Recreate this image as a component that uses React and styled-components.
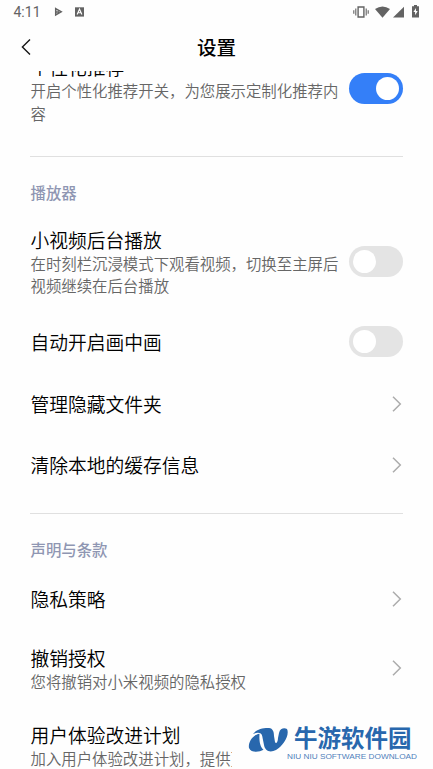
import React from 'react';
import styled, { createGlobalStyle } from 'styled-components';

const GlobalStyle = createGlobalStyle`
  * { box-sizing: border-box; }
  body { margin: 0; background: #fefefe; }
`;

const Screen = styled.div`
  position: relative;
  display: flex;
  flex-direction: column;
  width: 433px;
  height: 769px;
  overflow: hidden;
  background: #fefefe;
  color: #0b0b0b;
  font-family: "Noto Sans CJK SC", sans-serif;
`;

const StatusBar = styled.div`
  display: flex;
  align-items: center;
  flex: none;
  height: 23px;
  padding: 0 14px 0 13.5px;
  color: #636363;
`;

const Clock = styled.span`
  width: 40px;
  font: 14px/24px Roboto, sans-serif;
`;

const StatusIcon = styled.svg`
  flex: none;
  display: block;
  margin-left: ${(p) => p.$gap || 0}px;
`;

const Spacer = styled.div`
  flex: 1;
`;

const Header = styled.header`
  display: grid;
  grid-template-columns: 53px 1fr 53px;
  align-items: center;
  flex: none;
  height: 48px;
`;

const BackIcon = styled.svg`
  display: block;
  margin-left: 20px;
`;

const PageTitle = styled.h1`
  margin: 0;
  font-size: 19.5px;
  line-height: 28px;
  font-weight: 500;
  text-align: center;
  color: #000;
`;

const Content = styled.main`
  flex: 1;
  min-height: 0;
  overflow: hidden;
  padding: 0 30px;
`;

const ScrolledList = styled.div`
  display: flex;
  flex-direction: column;
  margin-top: -16px;
`;

const Row = styled.div`
  display: flex;
  align-items: center;
  justify-content: space-between;
  flex: none;
  height: ${(p) => p.$height}px;
  margin-bottom: ${(p) => p.$after}px;
`;

const RowText = styled.div`
  width: 310px;
  flex: none;
  padding: ${(p) => p.$inset || 0}px 0 0 0.5px;
`;

const RowTitle = styled.div`
  font-size: 18.75px;
  line-height: 24px;
  font-weight: 350;
  white-space: nowrap;
  color: #000;
`;

const RowNote = styled.div`
  font-size: 15.4px;
  line-height: 22.4px;
  font-weight: 350;
  color: #666;
`;

const Divider = styled.div`
  flex: none;
  height: 1px;
  background: #e0e0e0;
`;

const SectionLabel = styled.h2`
  flex: none;
  margin: 23px 0 24px;
  padding-left: 0.5px;
  font-size: 15.4px;
  line-height: 24px;
  font-weight: 500;
  color: #8f96b2;
`;

const Track = styled.div`
  display: flex;
  flex: none;
  justify-content: ${(p) => (p.$on ? 'flex-end' : 'flex-start')};
  width: 54px;
  height: 31px;
  padding: 4px;
  border-radius: 16px;
  background: ${(p) => (p.$on ? '#347ff8' : '#e4e4e4')};
`;

const Knob = styled.div`
  width: 23px;
  height: 23px;
  border-radius: 50%;
  background: #fff;
`;

const ArrowIcon = styled.svg`
  flex: none;
  display: block;
  margin-right: 1px;
`;

const Watermark = styled.div`
  position: absolute;
  left: 232px;
  top: 720px;
  display: flex;
  align-items: flex-start;
  width: 201px;
  height: 49px;
  padding: 7px 0 0 16px;
  background: #fefefe;
  color: #2867ad;
`;

const Brand = styled.div`
  display: flex;
  flex-direction: column;
  margin-left: -2px;
`;

const BrandName = styled.div`
  margin: -2px 0 0 7px;
  font-size: 23.5px;
  line-height: 24px;
  font-weight: 700;
  white-space: nowrap;
`;

const BrandTagline = styled.svg`
  display: block;
`;

const Toggle = ({ on }) => (
  <Track $on={on}>
    <Knob />
  </Track>
);

const Arrow = () => (
  <ArrowIcon width="10" height="18" viewBox="0 0 10 18" fill="none" stroke="#acacac" strokeWidth="1.5">
    <path d="M1 1.8 8.3 9 1 16.2" />
  </ArrowIcon>
);

const Setting = ({ title, note, height, after, inset, children }) => (
  <Row $height={height} $after={after}>
    <RowText $inset={inset}>
      <RowTitle>{title}</RowTitle>
      {note && <RowNote>{note}</RowNote>}
    </RowText>
    {children}
  </Row>
);

export default function App() {
  return (
    <Screen>
      <GlobalStyle />
      <StatusBar>
        <Clock>4:11</Clock>
        <StatusIcon width="9" height="10" viewBox="0 0 9 10" fill="none" stroke="currentColor" strokeWidth="1.5">
          <path d="M1.7 1.6 7.2 4.8 1.7 8Z M1.8 5H5" />
        </StatusIcon>
        <StatusIcon $gap={12} width="9" height="10" viewBox="0 0 9 10">
          <path fill="currentColor" d="M0 .3h9v9.3H0Z" />
          <path d="M2.1 7.5 4.5 2.2 6.9 7.5M3 5.8h3" fill="none" stroke="#fff" strokeWidth="1.1" />
        </StatusIcon>
        <Spacer />
        <StatusIcon width="16" height="12" viewBox="0 0 16 12" fill="none" stroke="currentColor" strokeWidth="1.1">
          <path d="M5.1 1h5.8v10H5.1Z" strokeWidth="1.4" />
          <path d="M2.8 2.6v6.8M13.2 2.6v6.8M.8 4.3v3.4M15.2 4.3v3.4" />
        </StatusIcon>
        <StatusIcon $gap={6} width="15" height="12" viewBox="0 0 15 12" fill="currentColor">
          <path d="M0 3Q7.5-2 15 3L7.5 11.8Z" />
        </StatusIcon>
        <StatusIcon $gap={3} width="11" height="12" viewBox="0 0 11 12" fill="currentColor">
          <path d="M11 .8v10.7H0Z" />
        </StatusIcon>
        <StatusIcon $gap={8} width="7" height="13" viewBox="0 0 7 13">
          <path fill="currentColor" d="M2 0h3v1.2h2v11.3H0V1.2h2Z" />
          <path fill="#fff" d="M4 3 1.4 7h1.7v3.2L5.7 6H4Z" />
        </StatusIcon>
      </StatusBar>
      <Header>
        <BackIcon width="12" height="18" viewBox="0 0 12 18" fill="none" stroke="#161616" strokeWidth="1.4">
          <path d="M10 1.5 2.4 9 10 16.5" />
        </BackIcon>
        <PageTitle>设置</PageTitle>
      </Header>
      <Content>
        <ScrolledList>
          <Setting title="个性化推荐" note="开启个性化推荐开关，为您展示定制化推荐内容" height={67} after={34} inset={2}>
            <Toggle on />
          </Setting>
          <Divider />
          <SectionLabel>播放器</SectionLabel>
          <Setting title="小视频后台播放" note="在时刻栏沉浸模式下观看视频，切换至主屏后视频继续在后台播放" height={67} after={31} inset={1}>
            <Toggle />
          </Setting>
          <Setting title="自动开启画中画" height={31} after={32}>
            <Toggle />
          </Setting>
          <Setting title="管理隐藏文件夹" height={30} after={31}>
            <Arrow />
          </Setting>
          <Setting title="清除本地的缓存信息" height={30} after={33}>
            <Arrow />
          </Setting>
          <Divider />
          <SectionLabel>声明与条款</SectionLabel>
          <Setting title="隐私策略" height={28} after={31}>
            <Arrow />
          </Setting>
          <Setting title="撤销授权" note="您将撤销对小米视频的隐私授权" height={47} after={30} inset={4}>
            <Arrow />
          </Setting>
          <Setting title="用户体验改进计划" note="加入用户体验改进计划，提供更" height={47} after={0} inset={4} />
        </ScrolledList>
      </Content>
      <Watermark>
        <svg width="41" height="26" viewBox="0 0 41 26" fill="#2867ad">
          <path d="M5 7C9 2 15 .8 21 1C25 1.4 26 5 26 9L27 15C28 17.5 30 15 30 11L31 6C32 1.5 36 .5 39 2C42 8 35 19 28 23C22 26 17 24 16 18L14.2 9C13.5 5 9 5 5 7Z" />
          <path d="M11.5 6.8C4 8 0 16 1 21C3 26 11 25.5 15.5 22.8C12 20 11 14 11.5 6.8Z" />
        </svg>
        <Brand>
          <BrandName>牛游软件园</BrandName>
          <BrandTagline width="132" height="12" viewBox="0 0 132 12">
            <text x="0" y="9.5" textLength="130" lengthAdjust="spacingAndGlyphs" fill="#4f80bb" fontFamily="Liberation Sans, sans-serif" fontSize="8">NIU NIU SOFTWARE DOWNLOAD</text>
          </BrandTagline>
        </Brand>
      </Watermark>
    </Screen>
  );
}
